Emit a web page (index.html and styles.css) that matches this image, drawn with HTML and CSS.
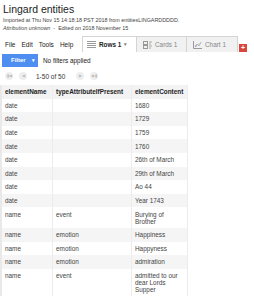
FILE: index.html
```html
<!DOCTYPE html>
<html lang="en">
<head>
    <meta charset="UTF-8">
    <meta name="viewport" content="width=device-width, initial-scale=1.0">
    <title>Lingard entities</title>
    <link rel="stylesheet" href="styles.css">
</head>
<body>
    <div class="header">
        <h1>Lingard entities</h1>
        <p class="meta">Imported at Thu Nov 15 14:18:18 PST 2018 from entitiesLINGARDDDDD.</p>
        <p class="meta"><em>Attribution unknown</em> &nbsp;-&nbsp; Edited on 2018 November 15</p>
    </div>

    <div class="toolbar">
        <div class="menu">
            <span>File</span>
            <span>Edit</span>
            <span>Tools</span>
            <span>Help</span>
        </div>
        <div class="tabs">
            <div class="tab active">
                <svg width="9" height="7" viewBox="0 0 9 7"><path d="M0 .5h9M0 2.5h9M0 4.5h9M0 6.5h9" stroke="#999" stroke-width="1"/></svg>
                <span>Rows 1</span>
                <span class="caret">&#9662;</span>
            </div>
            <div class="tab">
                <svg width="9" height="8" viewBox="0 0 9 8"><rect x=".5" y=".5" width="4" height="3" fill="none" stroke="#999"/><rect x=".5" y="4.5" width="4" height="3" fill="none" stroke="#999"/><path d="M6 1h3M6 3h2M6 5h3M6 7h2" stroke="#aaa"/></svg>
                <span>Cards 1</span>
            </div>
            <div class="tab">
                <svg width="9" height="8" viewBox="0 0 9 8"><path d="M.5 0v7.5H9" fill="none" stroke="#999"/><path d="M2 6l2-3 2 2 2-4" fill="none" stroke="#7aa6e8" stroke-width=".8"/><circle cx="3" cy="5" r=".7" fill="#e06666"/><circle cx="6" cy="3" r=".7" fill="#f1c232"/></svg>
                <span>Chart 1</span>
            </div>
            <div class="add-tab">+</div>
        </div>
    </div>

    <div class="filter-bar">
        <div class="filter-btn">
            <span>Filter</span>
            <span class="filter-caret">&#9662;</span>
        </div>
        <span class="filter-text">No filters applied</span>
    </div>

    <div class="pager">
        <span class="pager-btn">&#9646;&#9664;</span>
        <span class="pager-btn">&#9664;</span>
        <span class="pager-text">1-50 of 50</span>
        <span class="pager-btn">&#9654;</span>
        <span class="pager-btn">&#9654;&#9646;</span>
    </div>

    <div class="table-wrap">
        <table>
            <thead>
                <tr>
                    <th class="col-name">elementName</th>
                    <th class="col-type">typeAttributeIfPresent</th>
                    <th class="col-content">elementContent</th>
                </tr>
            </thead>
            <tbody>
                <tr><td>date</td><td></td><td>1680</td></tr>
                <tr><td>date</td><td></td><td>1729</td></tr>
                <tr><td>date</td><td></td><td>1759</td></tr>
                <tr><td>date</td><td></td><td>1760</td></tr>
                <tr><td>date</td><td></td><td>26th of March</td></tr>
                <tr><td>date</td><td></td><td>29th of March</td></tr>
                <tr><td>date</td><td></td><td>Ao 44</td></tr>
                <tr><td>date</td><td></td><td>Year 1743</td></tr>
                <tr><td>name</td><td>event</td><td>Burying of Brother</td></tr>
                <tr><td>name</td><td>emotion</td><td>Happiness</td></tr>
                <tr><td>name</td><td>emotion</td><td>Happyness</td></tr>
                <tr><td>name</td><td>emotion</td><td>admiration</td></tr>
                <tr><td>name</td><td>event</td><td>admitted to our dear Lords Supper</td></tr>
            </tbody>
        </table>
    </div>
</body>
</html>
```

FILE: styles.css
```css
body {
    margin: 0;
    font-family: "Liberation Sans", Arial, sans-serif;
    color: #333;
    background: #fff;
}
.header {
    padding: 3px 3px 0 3px;
    height: 32px;
}
h1 {
    font-size: 10.5px;
    font-weight: normal;
    line-height: 12px;
    margin: 0 0 1px 0;
    color: #222;
}
.meta {
    font-size: 5.4px;
    line-height: 8px;
    margin: 0;
    color: #444;
}
.toolbar {
    display: flex;
    align-items: flex-end;
    height: 17px;
    padding-left: 5px;
}
.menu {
    display: flex;
    gap: 6px;
    font-size: 6.5px;
    color: #222;
    width: 78px;
    padding-bottom: 4px;
}
.tabs {
    display: flex;
    align-items: flex-end;
}
.tab {
    display: flex;
    align-items: center;
    gap: 3px;
    height: 16px;
    box-sizing: border-box;
    border: 1px solid #d4d4d4;
    border-bottom: none;
    background: #f1f1f1;
    color: #888;
    font-size: 6.4px;
    padding: 0 6px;
    margin-left: -1px;
}
.tab:nth-child(1) {
    width: 55px;
}
.tab:nth-child(2) {
    width: 51px;
}
.tab:nth-child(3) {
    width: 52px;
}
.tab.active {
    background: #fff;
    color: #222;
    font-weight: bold;
    padding-left: 4px;
}
.caret {
    font-size: 4.5px;
    color: #888;
}
.add-tab {
    width: 8px;
    height: 8px;
    background: #d9463b;
    color: #fff;
    font-size: 7px;
    font-weight: bold;
    line-height: 8px;
    text-align: center;
    margin-left: 1px;
}
.filter-bar {
    display: flex;
    align-items: center;
    gap: 5px;
    padding: 1px 3px 0 2px;
    height: 14px;
}
.filter-btn {
    display: flex;
    align-items: center;
    justify-content: space-between;
    width: 36px;
    height: 13px;
    box-sizing: border-box;
    background: #4d8ef0;
    color: #fff;
    font-size: 6px;
    font-weight: bold;
    padding: 0 3px 0 9px;
}
.filter-caret {
    font-size: 4.5px;
}
.filter-text {
    font-size: 6.4px;
    color: #222;
}
.pager {
    display: flex;
    align-items: center;
    gap: 6px;
    height: 18px;
    padding-left: 5px;
    font-size: 6.5px;
    color: #333;
}
.pager-btn {
    width: 8px;
    height: 8px;
    border-radius: 50%;
    background: #eee;
    color: #bbb;
    font-size: 3.5px;
    line-height: 8px;
    text-align: center;
    letter-spacing: -0.5px;
}
.pager-text {
    margin: 0 5px 0 3px;
}
.table-wrap {
    border-left: 2px solid #e9e9e9;
}
table {
    border-collapse: collapse;
    font-size: 6.4px;
    line-height: 7px;
    width: 186px;
    table-layout: fixed;
}
th, td {
    text-align: left;
    vertical-align: top;
    padding: 3.3px 3px 3.3px 3px;
    border-right: 1px solid #ececec;
}
th {
    background: #f3f3f3;
    color: #222;
    font-weight: bold;
}
.col-name {
    width: 44px;
}
.col-type {
    width: 72px;
}
td {
    color: #444;
}
tbody tr:nth-child(even) {
    background: #f5f5f5;
}
```
